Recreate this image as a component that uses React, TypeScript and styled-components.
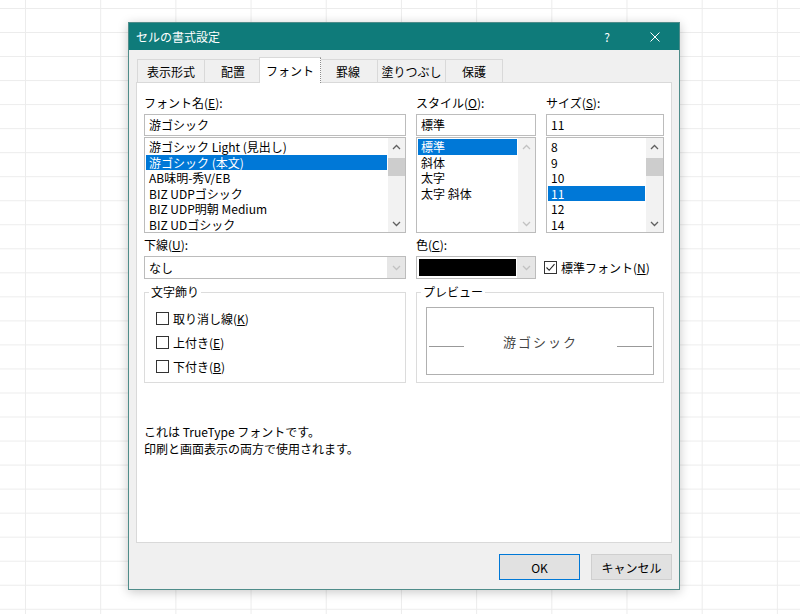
import styled, { createGlobalStyle } from 'styled-components';

const GlobalStyle = createGlobalStyle`
  html, body {
    margin: 0;
    padding: 0;
  }
  body {
    font-family: "Noto Sans CJK JP", "Noto Sans", sans-serif;
    font-size: 12px;
    color: #000;
  }
`;

const Sheet = styled.div`
  width: 800px;
  height: 614px;
  box-sizing: border-box;
  padding: 22px 0 0 128px;
  overflow: hidden;
  background-color: #fff;
  background-image: linear-gradient(to right, #ececec 1px, transparent 1px),
    linear-gradient(to bottom, #ececec 1px, transparent 1px);
  background-size: 75.2px 24.04px;
  background-position: 25px 0, 0 8px;
`;

const Dialog = styled.div`
  width: 552px;
  height: 568px;
  box-sizing: border-box;
  border: 1px solid #4f8c8a;
  background: #f0f0f0;
  box-shadow: 0 2px 10px rgba(0, 0, 0, 0.22);
  display: flex;
  flex-direction: column;
`;

const TitleBar = styled.div`
  height: 27px;
  flex: none;
  display: flex;
  align-items: center;
  padding-left: 7px;
  background: #0f7b7a;
  color: #fff;
`;

const TitleText = styled.div`
  flex: 1;
  font-size: 12px;
  line-height: 27px;
`;

const TitleButton = styled.div`
  width: 48px;
  height: 27px;
  display: flex;
  align-items: center;
  justify-content: center;
  font-size: 12px;
`;

const Body = styled.div`
  flex: 1;
  display: flex;
  flex-direction: column;
  padding: 7px 7px 9px 7px;
  min-height: 0;
`;

const TabStrip = styled.div`
  height: 25px;
  flex: none;
  display: flex;
  align-items: flex-end;
  padding-left: 2px;
`;

const Tab = styled.div<{ $w: number; $active?: boolean }>`
  position: relative;
  width: ${(p) => p.$w}px;
  height: ${(p) => (p.$active ? 26 : 23)}px;
  box-sizing: border-box;
  margin: ${(p) => (p.$active ? '0 -2px -1px -3px' : '0 0 0 -1px')};
  z-index: ${(p) => (p.$active ? 1 : 0)};
  border: 1px solid #d9d9d9;
  border-bottom: none;
  ${(p) => (p.$active ? 'border-right: 1px dotted #8c8c8c;' : '')}
  background: ${(p) => (p.$active ? '#fff' : '#f0f0f0')};
  display: flex;
  align-items: center;
  justify-content: center;
  font-size: 12px;
  white-space: nowrap;
`;

const Panel = styled.div`
  flex: 1;
  background: #fff;
  border: 1px solid #d9d9d9;
  padding: 12px 8px 0 7px;
  display: grid;
  grid-template-columns: 262px 120px 118px;
  column-gap: 10px;
  align-content: start;
`;

const Field = styled.div`
  display: flex;
  flex-direction: column;
`;

const Label = styled.div<{ $gap?: number }>`
  height: 16px;
  line-height: 16px;
  margin-top: ${(p) => p.$gap ?? 0}px;
  margin-bottom: 3px;
  white-space: nowrap;
`;

const TextBox = styled.div`
  height: 22px;
  box-sizing: border-box;
  border: 1px solid #bcbcbc;
  padding-left: 4px;
  line-height: 20px;
  white-space: nowrap;
`;

const ListBox = styled.div`
  height: 96px;
  margin-top: 1px;
  box-sizing: border-box;
  border: 1px solid #bcbcbc;
  display: flex;
`;

const Items = styled.div`
  flex: 1;
  min-width: 0;
  padding: 1px;
`;

const Item = styled.div<{ $selected?: boolean }>`
  height: 15.5px;
  line-height: 15.5px;
  padding-left: 3px;
  white-space: nowrap;
  overflow: hidden;
  background: ${(p) => (p.$selected ? '#0078d7' : 'transparent')};
  color: ${(p) => (p.$selected ? '#fff' : '#000')};
`;

const ScrollBar = styled.div`
  width: 17px;
  flex: none;
  background: #f2f2f2;
  display: flex;
  flex-direction: column;
`;

const ScrollArrow = styled.div`
  height: 17px;
  flex: none;
  display: flex;
  align-items: center;
  justify-content: center;
`;

const ScrollTrack = styled.div`
  flex: 1;
  padding: 3px 0 0 0;
`;

const Thumb = styled.div`
  height: 18px;
  background: #cdcdcd;
`;

const Select = styled.div`
  height: 23px;
  box-sizing: border-box;
  border: 1px solid #bcbcbc;
  background: #fff;
  display: flex;
`;

const SelectValue = styled.div`
  flex: 1;
  padding-left: 4px;
  line-height: 21px;
`;

const Swatch = styled.div`
  flex: 1;
  margin: 2px 1px 2px 2px;
  background: #000;
`;

const DropButton = styled.div`
  width: 18px;
  flex: none;
  background: #e6e6e6;
  display: flex;
  align-items: center;
  justify-content: center;
`;

const CheckRow = styled.div<{ $height?: number }>`
  height: ${(p) => p.$height ?? 24}px;
  display: flex;
  align-items: center;
  gap: 4px;
  white-space: nowrap;
`;

const InlineCheck = styled(CheckRow)`
  align-self: end;
  margin-left: -2px;
`;

const Box = styled.div`
  width: 13px;
  height: 13px;
  flex: none;
  box-sizing: border-box;
  border: 1px solid #333;
  background: #fff;
  display: flex;
  align-items: center;
  justify-content: center;
`;

const GroupBox = styled.div<{ $span?: string }>`
  grid-column: ${(p) => p.$span ?? 'auto'};
  margin-top: 13px;
  height: 89px;
  border: 1px solid #dcdcdc;
  display: flex;
  flex-direction: column;
`;

const Legend = styled.div`
  align-self: flex-start;
  margin: -8px 0 0 4px;
  padding: 0 2px;
  height: 14px;
  line-height: 14px;
  background: #fff;
`;

const Checks = styled.div`
  padding: 7px 0 0 11px;
`;

const PreviewBox = styled.div`
  height: 68px;
  box-sizing: border-box;
  margin: 8px 9px 0 9px;
  border: 1px solid #b0b0b0;
  display: flex;
  align-items: center;
  justify-content: space-between;
  padding: 0 1px 0 2px;
`;

const Rule = styled.div`
  width: 35px;
  height: 1px;
  margin-top: 10px;
  background: #999;
`;

const PreviewText = styled.div`
  font-size: 13px;
  letter-spacing: 2px;
  color: #444;
`;

const Note = styled.div`
  grid-column: 1 / -1;
  margin-top: 40px;
  line-height: 17px;
`;

const Footer = styled.div`
  flex: none;
  display: flex;
  justify-content: flex-end;
  gap: 11px;
  padding-top: 11px;
`;

const Button = styled.div<{ $default?: boolean }>`
  width: 81px;
  height: 26px;
  box-sizing: border-box;
  border: 1px solid ${(p) => (p.$default ? '#0078d7' : '#cfcfcf')};
  background: #e1e1e1;
  display: flex;
  align-items: center;
  justify-content: center;
`;

const Chevron = ({ up, faded }: { up?: boolean; faded?: boolean }) => (
  <svg width="9" height="6" viewBox="0 0 9 6">
    <path
      d={up ? 'M1 5 L4.5 1.5 L8 5' : 'M1 1 L4.5 4.5 L8 1'}
      fill="none"
      stroke={faded ? '#c2c2c2' : '#606060'}
      strokeWidth="1.3"
    />
  </svg>
);

const Tick = () => (
  <svg width="11" height="11" viewBox="0 0 11 11">
    <path d="M1.5 5.5 L4.2 8.3 L9.5 2.2" fill="none" stroke="#222" strokeWidth="1.1" />
  </svg>
);

type ListProps = { items: string[]; selected: number; disabled?: boolean; thumb?: boolean };

const List = ({ items, selected, disabled, thumb }: ListProps) => (
  <ListBox>
    <Items>
      {items.map((it, i) => (
        <Item key={it} $selected={i === selected}>
          {it}
        </Item>
      ))}
    </Items>
    <ScrollBar>
      <ScrollArrow>
        <Chevron up faded={disabled} />
      </ScrollArrow>
      <ScrollTrack>{thumb && <Thumb />}</ScrollTrack>
      <ScrollArrow>
        <Chevron faded={disabled} />
      </ScrollArrow>
    </ScrollBar>
  </ListBox>
);

const tabs = [
  { label: '表示形式', w: 68 },
  { label: '配置', w: 58 },
  { label: 'フォント', w: 62, active: true },
  { label: '罫線', w: 60 },
  { label: '塗りつぶし', w: 69 },
  { label: '保護', w: 58 },
];

const fonts = [
  '游ゴシック Light (見出し)',
  '游ゴシック (本文)',
  'AB味明-秀V/EB',
  'BIZ UDPゴシック',
  'BIZ UDP明朝 Medium',
  'BIZ UDゴシック',
];

export default function App() {
  return (
    <>
      <GlobalStyle />
      <Sheet>
        <Dialog>
          <TitleBar>
            <TitleText>セルの書式設定</TitleText>
            <TitleButton>?</TitleButton>
            <TitleButton>
              <svg width="10" height="10" viewBox="0 0 10 10">
                <path d="M0.5 0.5 L9.5 9.5 M9.5 0.5 L0.5 9.5" stroke="#fff" strokeWidth="1" />
              </svg>
            </TitleButton>
          </TitleBar>
          <Body>
            <TabStrip>
              {tabs.map((t) => (
                <Tab key={t.label} $w={t.w} $active={t.active}>
                  {t.label}
                </Tab>
              ))}
            </TabStrip>
            <Panel>
              <Field>
                <Label>
                  フォント名(<u>E</u>):
                </Label>
                <TextBox>游ゴシック</TextBox>
                <List items={fonts} selected={1} thumb />
              </Field>
              <Field>
                <Label>
                  スタイル(<u>O</u>):
                </Label>
                <TextBox>標準</TextBox>
                <List items={['標準', '斜体', '太字', '太字 斜体']} selected={0} disabled />
              </Field>
              <Field>
                <Label>
                  サイズ(<u>S</u>):
                </Label>
                <TextBox>11</TextBox>
                <List items={['8', '9', '10', '11', '12', '14']} selected={3} thumb />
              </Field>

              <Field>
                <Label $gap={4}>
                  下線(<u>U</u>):
                </Label>
                <Select>
                  <SelectValue>なし</SelectValue>
                  <DropButton>
                    <Chevron faded />
                  </DropButton>
                </Select>
              </Field>
              <Field>
                <Label $gap={4}>
                  色(<u>C</u>):
                </Label>
                <Select>
                  <Swatch />
                  <DropButton>
                    <Chevron faded />
                  </DropButton>
                </Select>
              </Field>
              <InlineCheck $height={23}>
                <Box>
                  <Tick />
                </Box>
                <span>
                  標準フォント(<u>N</u>)
                </span>
              </InlineCheck>

              <GroupBox>
                <Legend>文字飾り</Legend>
                <Checks>
                  <CheckRow>
                    <Box />
                    <span>
                      取り消し線(<u>K</u>)
                    </span>
                  </CheckRow>
                  <CheckRow>
                    <Box />
                    <span>
                      上付き(<u>E</u>)
                    </span>
                  </CheckRow>
                  <CheckRow>
                    <Box />
                    <span>
                      下付き(<u>B</u>)
                    </span>
                  </CheckRow>
                </Checks>
              </GroupBox>
              <GroupBox $span="2 / 4">
                <Legend>プレビュー</Legend>
                <PreviewBox>
                  <Rule />
                  <PreviewText>游ゴシック</PreviewText>
                  <Rule />
                </PreviewBox>
              </GroupBox>

              <Note>
                これは TrueType フォントです。
                <br />
                印刷と画面表示の両方で使用されます。
              </Note>
            </Panel>
            <Footer>
              <Button $default>OK</Button>
              <Button>キャンセル</Button>
            </Footer>
          </Body>
        </Dialog>
      </Sheet>
    </>
  );
}
